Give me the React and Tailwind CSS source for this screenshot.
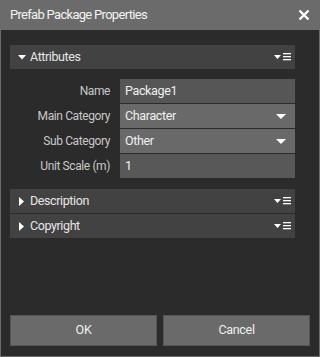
import React from "react";

const font = { fontFamily: "Roboto, 'Noto Sans', sans-serif" };

function MenuIcon() {
  return (
    <svg width="17" height="8" viewBox="0 0 17 8" className="block">
      <polygon points="0,2 7,2 3.5,6" fill="#ffffff" />
      <rect x="9" y="0" width="8" height="1.3" fill="#ffffff" />
      <rect x="9" y="3" width="8" height="1.3" fill="#ffffff" />
      <rect x="9" y="6" width="8" height="1.3" fill="#ffffff" />
    </svg>
  );
}

function SectionHeader({ title, open }) {
  return (
    <div className="flex h-[24px] items-center bg-[#424242] pl-[8px] pr-[4px]">
      <div className="flex w-[12px] items-center">
        {open ? (
          <svg width="8" height="5" viewBox="0 0 8 5" className="block">
            <polygon points="0,0 8,0 4,4.5" fill="#ffffff" />
          </svg>
        ) : (
          <svg width="6" height="9" viewBox="0 0 6 9" className="ml-[1px] block">
            <polygon points="0,0 5,4.5 0,9" fill="#ffffff" />
          </svg>
        )}
      </div>
      <span className="flex-1 text-[12.5px] tracking-[-0.4px] text-[#e6e6e6]">{title}</span>
      <MenuIcon />
    </div>
  );
}

function Row({ label, value, bg, dropdown }) {
  return (
    <div className="flex h-[24px]">
      <div className="flex w-[110px] items-center justify-end pr-[10px] text-[12px] tracking-[-0.4px] text-[#c8c8c8]">
        {label}
      </div>
      <div className={`flex flex-1 items-center justify-between pl-[5px] pr-[9px] text-[12.5px] tracking-[-0.35px] text-[#f0f0f0] ${bg}`}>
        <span>{value}</span>
        {dropdown && (
          <svg width="10" height="5" viewBox="0 0 10 5" className="block">
            <polygon points="0,0 10,0 5,5" fill="#ffffff" />
          </svg>
        )}
      </div>
    </div>
  );
}

export default function App() {
  return (
    <div style={font} className="flex h-[357px] w-[320px] flex-col border border-t-0 border-[#6b6b6b] bg-[#2b2b2b]">
      <div className="flex h-[30px] items-center justify-between bg-[#6b6b6b] pl-[9px] pr-[9px]">
        <span className="text-[13px] tracking-[-0.7px] text-[#f2f2f2]">Prefab Package Properties</span>
        <svg width="12" height="12" viewBox="0 0 12 12" className="block">
          <path d="M1.5 1.5 L10.5 10.5 M10.5 1.5 L1.5 10.5" stroke="#ffffff" strokeWidth="2.4" />
        </svg>
      </div>

      <div className="mt-[15px] ml-[9px] w-[285px]">
        <SectionHeader title="Attributes" open />
        <div className="flex flex-col gap-[1px] pt-[10px] pb-[10px]">
          <Row label="Name" value="Package1" bg="bg-[#565656]" />
          <Row label="Main Category" value="Character" bg="bg-[#696969]" dropdown />
          <Row label="Sub Category" value="Other" bg="bg-[#696969]" dropdown />
          <Row label="Unit Scale (m)" value="1" bg="bg-[#585858]" />
        </div>
        <div className="mt-[1px] flex flex-col gap-[1px]">
          <SectionHeader title="Description" />
          <SectionHeader title="Copyright" />
        </div>
      </div>

      <div className="flex-1" />

      <div className="mb-[10px] flex gap-[6px] px-[9px]">
        <button className="flex h-[31px] flex-1 items-center justify-center border border-[#555555] bg-[#6a6a6a] text-[12.5px] tracking-[-0.3px] text-[#f0f0f0]">
          OK
        </button>
        <button className="flex h-[31px] flex-1 items-center justify-center border border-[#555555] bg-[#6a6a6a] text-[12.5px] tracking-[-0.3px] text-[#f0f0f0]">
          Cancel
        </button>
      </div>
    </div>
  );
}
